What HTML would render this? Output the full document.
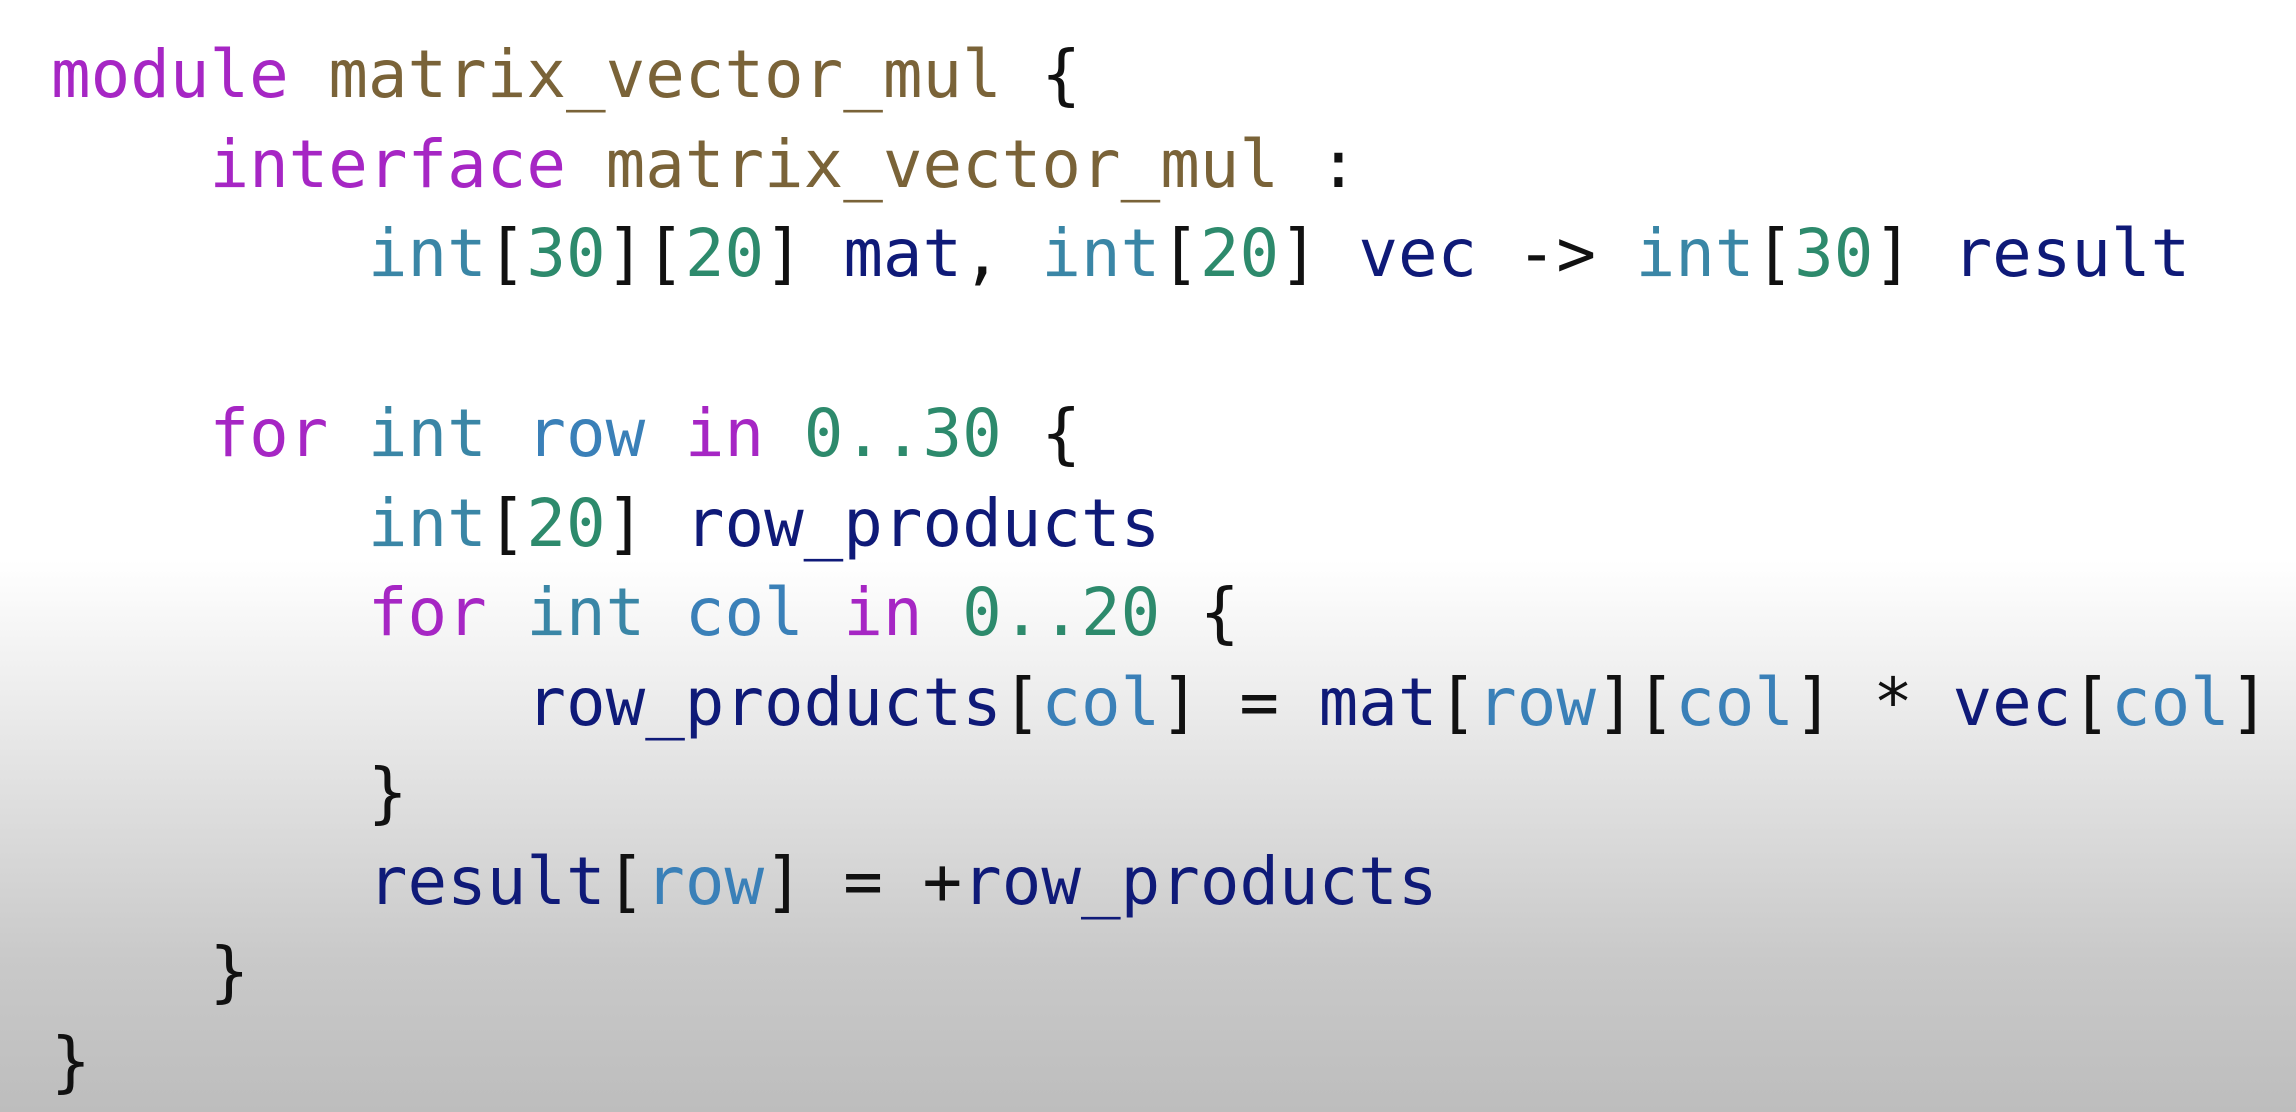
<!DOCTYPE html>
<html><head><meta charset="utf-8"><style>
html,body{margin:0;padding:0;}
body{width:2296px;height:1112px;overflow:hidden;background:linear-gradient(to bottom,#ffffff 0px,#ffffff 560px,#e4e4e4 760px,#c9c9c9 960px,#bdbdbd 1112px);}
pre{position:absolute;left:51px;top:30px;margin:0;font-family:"DejaVu Sans Mono","Liberation Mono",monospace;font-size:65.8px;line-height:89.7px;color:#111;}
.k{color:#a626c4}.m{color:#7a6338}.t{color:#3a86a6}.n{color:#2d8a6c}.v{color:#0f1a78}.l{color:#3a80b8}
</style></head><body>
<pre><span class="k">module</span> <span class="m">matrix_vector_mul</span> {
    <span class="k">interface</span> <span class="m">matrix_vector_mul</span> :
        <span class="t">int</span>[<span class="n">30</span>][<span class="n">20</span>] <span class="v">mat</span>, <span class="t">int</span>[<span class="n">20</span>] <span class="v">vec</span> -&gt; <span class="t">int</span>[<span class="n">30</span>] <span class="v">result</span>

    <span class="k">for</span> <span class="t">int</span> <span class="l">row</span> <span class="k">in</span> <span class="n">0..30</span> {
        <span class="t">int</span>[<span class="n">20</span>] <span class="v">row_products</span>
        <span class="k">for</span> <span class="t">int</span> <span class="l">col</span> <span class="k">in</span> <span class="n">0..20</span> {
            <span class="v">row_products</span>[<span class="l">col</span>] = <span class="v">mat</span>[<span class="l">row</span>][<span class="l">col</span>] * <span class="v">vec</span>[<span class="l">col</span>]
        }
        <span class="v">result</span>[<span class="l">row</span>] = +<span class="v">row_products</span>
    }
}</pre>
</body></html>
